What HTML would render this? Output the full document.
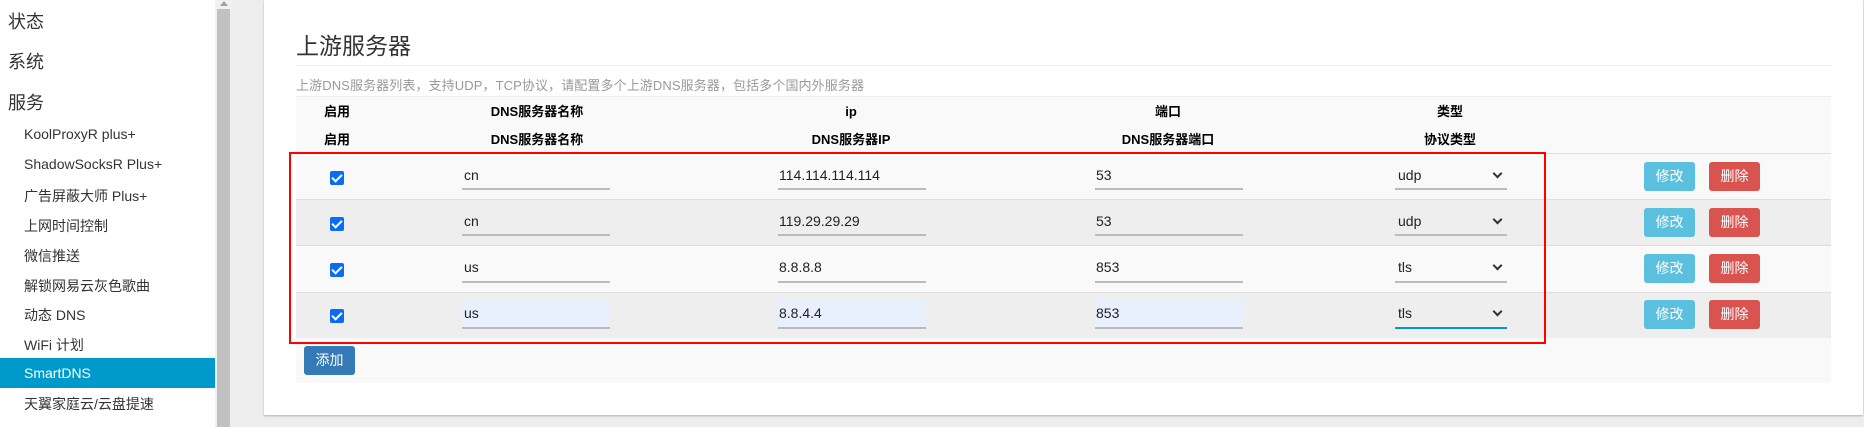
<!DOCTYPE html>
<html><head><meta charset="utf-8"><style>
*{margin:0;padding:0;box-sizing:border-box}
body{width:1864px;height:427px;overflow:hidden;background:#eee;font-family:"Liberation Sans","Noto Sans CJK SC",sans-serif;position:relative;color:#333}
.a{position:absolute;white-space:nowrap}
.side{left:0;top:0;width:215px;height:427px;background:#fff}
.top{font-size:18px;left:8px;color:#333}
.sub{font-size:14px;left:24px;color:#333}
.hd{font-size:13px;font-weight:bold;color:#000;transform:translateX(-50%);line-height:19px;height:19px}
.inp{height:2px;background:#bbb}
.txt{font-size:14px;color:#222}
.cb{width:14px;height:14px;background:#0a6cf5;border-radius:2px}
.cb:after{content:"";position:absolute;left:4px;top:1px;width:4px;height:8px;border:solid #fff;border-width:0 2px 2px 0;transform:rotate(45deg)}
.btn{height:29px;width:51px;border-radius:3px;color:#fff;font-size:14px;text-align:center;line-height:29px}
.chev{width:7px;height:7px;border:solid #333;border-width:0 2px 2px 0;transform:rotate(45deg)}
</style></head><body>
<div class="a side"></div>
<div class="a top" style="top:8px">状态</div>
<div class="a top" style="top:48px">系统</div>
<div class="a top" style="top:89px">服务</div>
<div class="a sub" style="top:126px">KoolProxyR plus+</div>
<div class="a sub" style="top:156px">ShadowSocksR Plus+</div>
<div class="a sub" style="top:186px">广告屏蔽大师 Plus+</div>
<div class="a sub" style="top:216px">上网时间控制</div>
<div class="a sub" style="top:246px">微信推送</div>
<div class="a sub" style="top:276px">解锁网易云灰色歌曲</div>
<div class="a sub" style="top:305px">动态 DNS</div>
<div class="a sub" style="top:335px">WiFi 计划</div>
<div class="a" style="left:0;top:358px;width:215px;height:30px;background:#0099cc"></div>
<div class="a sub" style="top:365px;color:#fff">SmartDNS</div>
<div class="a sub" style="top:394px">天翼家庭云/云盘提速</div>
<div class="a" style="left:215px;top:0;width:16px;height:427px;background:#f1f1f1"></div>
<div class="a" style="left:217px;top:9px;width:13px;height:418px;background:#c1c1c1"></div>
<div class="a" style="left:220px;top:1px;width:0;height:0;border-left:4px solid transparent;border-right:4px solid transparent;border-bottom:5px solid #a3a3a3"></div>

<div class="a" style="left:264px;top:0;width:1599px;height:415px;background:#fff;box-shadow:0 1px 2px rgba(0,0,0,.25)"></div>
<div class="a" style="left:296px;top:27px;font-size:23px;color:#333">上游服务器</div>
<div class="a" style="left:296px;top:65px;width:1536px;height:1px;background:#eee"></div>
<div class="a" style="left:296px;top:75px;font-size:13px;color:#999;letter-spacing:0.1px">上游DNS服务器列表，支持UDP，TCP协议，请配置多个上游DNS服务器，包括多个国内外服务器</div>
<div class="a" style="left:296px;top:96px;width:1535px;height:287px;background:#f9f9f9;border-top:1px solid #eee"></div>
<div class="a hd" style="left:337px;top:102px">启用</div>
<div class="a hd" style="left:537px;top:102px">DNS服务器名称</div>
<div class="a hd" style="left:851px;top:102px">ip</div>
<div class="a hd" style="left:1168px;top:102px">端口</div>
<div class="a hd" style="left:1450px;top:102px">类型</div>
<div class="a hd" style="left:337px;top:130px">启用</div>
<div class="a hd" style="left:537px;top:130px">DNS服务器名称</div>
<div class="a hd" style="left:851px;top:130px">DNS服务器IP</div>
<div class="a hd" style="left:1168px;top:130px">DNS服务器端口</div>
<div class="a hd" style="left:1450px;top:130px">协议类型</div>

<div class="a" style="left:296px;top:153px;width:1535px;height:46px;background:#f9f9f9;border-top:1px solid #ddd"></div>
<div class="a" style="left:296px;top:199px;width:1535px;height:46px;background:#eee;border-top:1px solid #ddd"></div>
<div class="a" style="left:296px;top:245px;width:1535px;height:47px;background:#f9f9f9;border-top:1px solid #ddd"></div>
<div class="a" style="left:296px;top:292px;width:1535px;height:46px;background:#eee;border-top:1px solid #ddd"></div>

<div class="a cb" style="left:330px;top:171px"></div>
<div class="a txt" style="left:464px;top:167px">cn</div><div class="a inp" style="left:462px;top:188px;width:148px"></div>
<div class="a txt" style="left:779px;top:167px">114.114.114.114</div><div class="a inp" style="left:778px;top:188px;width:148px"></div>
<div class="a txt" style="left:1096px;top:167px">53</div><div class="a inp" style="left:1095px;top:188px;width:148px"></div>
<div class="a txt" style="left:1398px;top:167px">udp</div><div class="a chev" style="left:1494px;top:170px"></div><div class="a inp" style="left:1395px;top:188px;width:112px"></div>
<div class="a btn" style="left:1644px;top:162px;background:#5bc0de">修改</div>
<div class="a btn" style="left:1709px;top:162px;background:#d9534f">删除</div>

<div class="a cb" style="left:330px;top:217px"></div>
<div class="a txt" style="left:464px;top:213px">cn</div><div class="a inp" style="left:462px;top:234px;width:148px"></div>
<div class="a txt" style="left:779px;top:213px">119.29.29.29</div><div class="a inp" style="left:778px;top:234px;width:148px"></div>
<div class="a txt" style="left:1096px;top:213px">53</div><div class="a inp" style="left:1095px;top:234px;width:148px"></div>
<div class="a txt" style="left:1398px;top:213px">udp</div><div class="a chev" style="left:1494px;top:216px"></div><div class="a inp" style="left:1395px;top:234px;width:112px"></div>
<div class="a btn" style="left:1644px;top:208px;background:#5bc0de">修改</div>
<div class="a btn" style="left:1709px;top:208px;background:#d9534f">删除</div>

<div class="a cb" style="left:330px;top:263px"></div>
<div class="a txt" style="left:464px;top:259px">us</div><div class="a inp" style="left:462px;top:281px;width:148px"></div>
<div class="a txt" style="left:779px;top:259px">8.8.8.8</div><div class="a inp" style="left:778px;top:281px;width:148px"></div>
<div class="a txt" style="left:1096px;top:259px">853</div><div class="a inp" style="left:1095px;top:281px;width:148px"></div>
<div class="a txt" style="left:1398px;top:259px">tls</div><div class="a chev" style="left:1494px;top:262px"></div><div class="a inp" style="left:1395px;top:281px;width:112px"></div>
<div class="a btn" style="left:1644px;top:254px;background:#5bc0de">修改</div>
<div class="a btn" style="left:1709px;top:254px;background:#d9534f">删除</div>

<div class="a cb" style="left:330px;top:309px"></div>
<div class="a" style="left:462px;top:300px;width:148px;height:27px;background:#e8f0fe"></div>
<div class="a" style="left:778px;top:300px;width:148px;height:27px;background:#e8f0fe"></div>
<div class="a" style="left:1095px;top:300px;width:148px;height:27px;background:#e8f0fe"></div>
<div class="a txt" style="left:464px;top:305px">us</div><div class="a inp" style="left:462px;top:327px;width:148px"></div>
<div class="a txt" style="left:779px;top:305px">8.8.4.4</div><div class="a inp" style="left:778px;top:327px;width:148px"></div>
<div class="a txt" style="left:1096px;top:305px">853</div><div class="a inp" style="left:1095px;top:327px;width:148px"></div>
<div class="a txt" style="left:1398px;top:305px">tls</div><div class="a chev" style="left:1494px;top:308px"></div><div class="a inp" style="left:1395px;top:327px;width:112px;background:#0099cc"></div>
<div class="a btn" style="left:1644px;top:300px;background:#5bc0de">修改</div>
<div class="a btn" style="left:1709px;top:300px;background:#d9534f">删除</div>

<div class="a" style="left:289px;top:152px;width:1257px;height:192px;border:2px solid #f00"></div>
<div class="a btn" style="left:304px;top:346px;background:#337ab7">添加</div>
</body></html>
